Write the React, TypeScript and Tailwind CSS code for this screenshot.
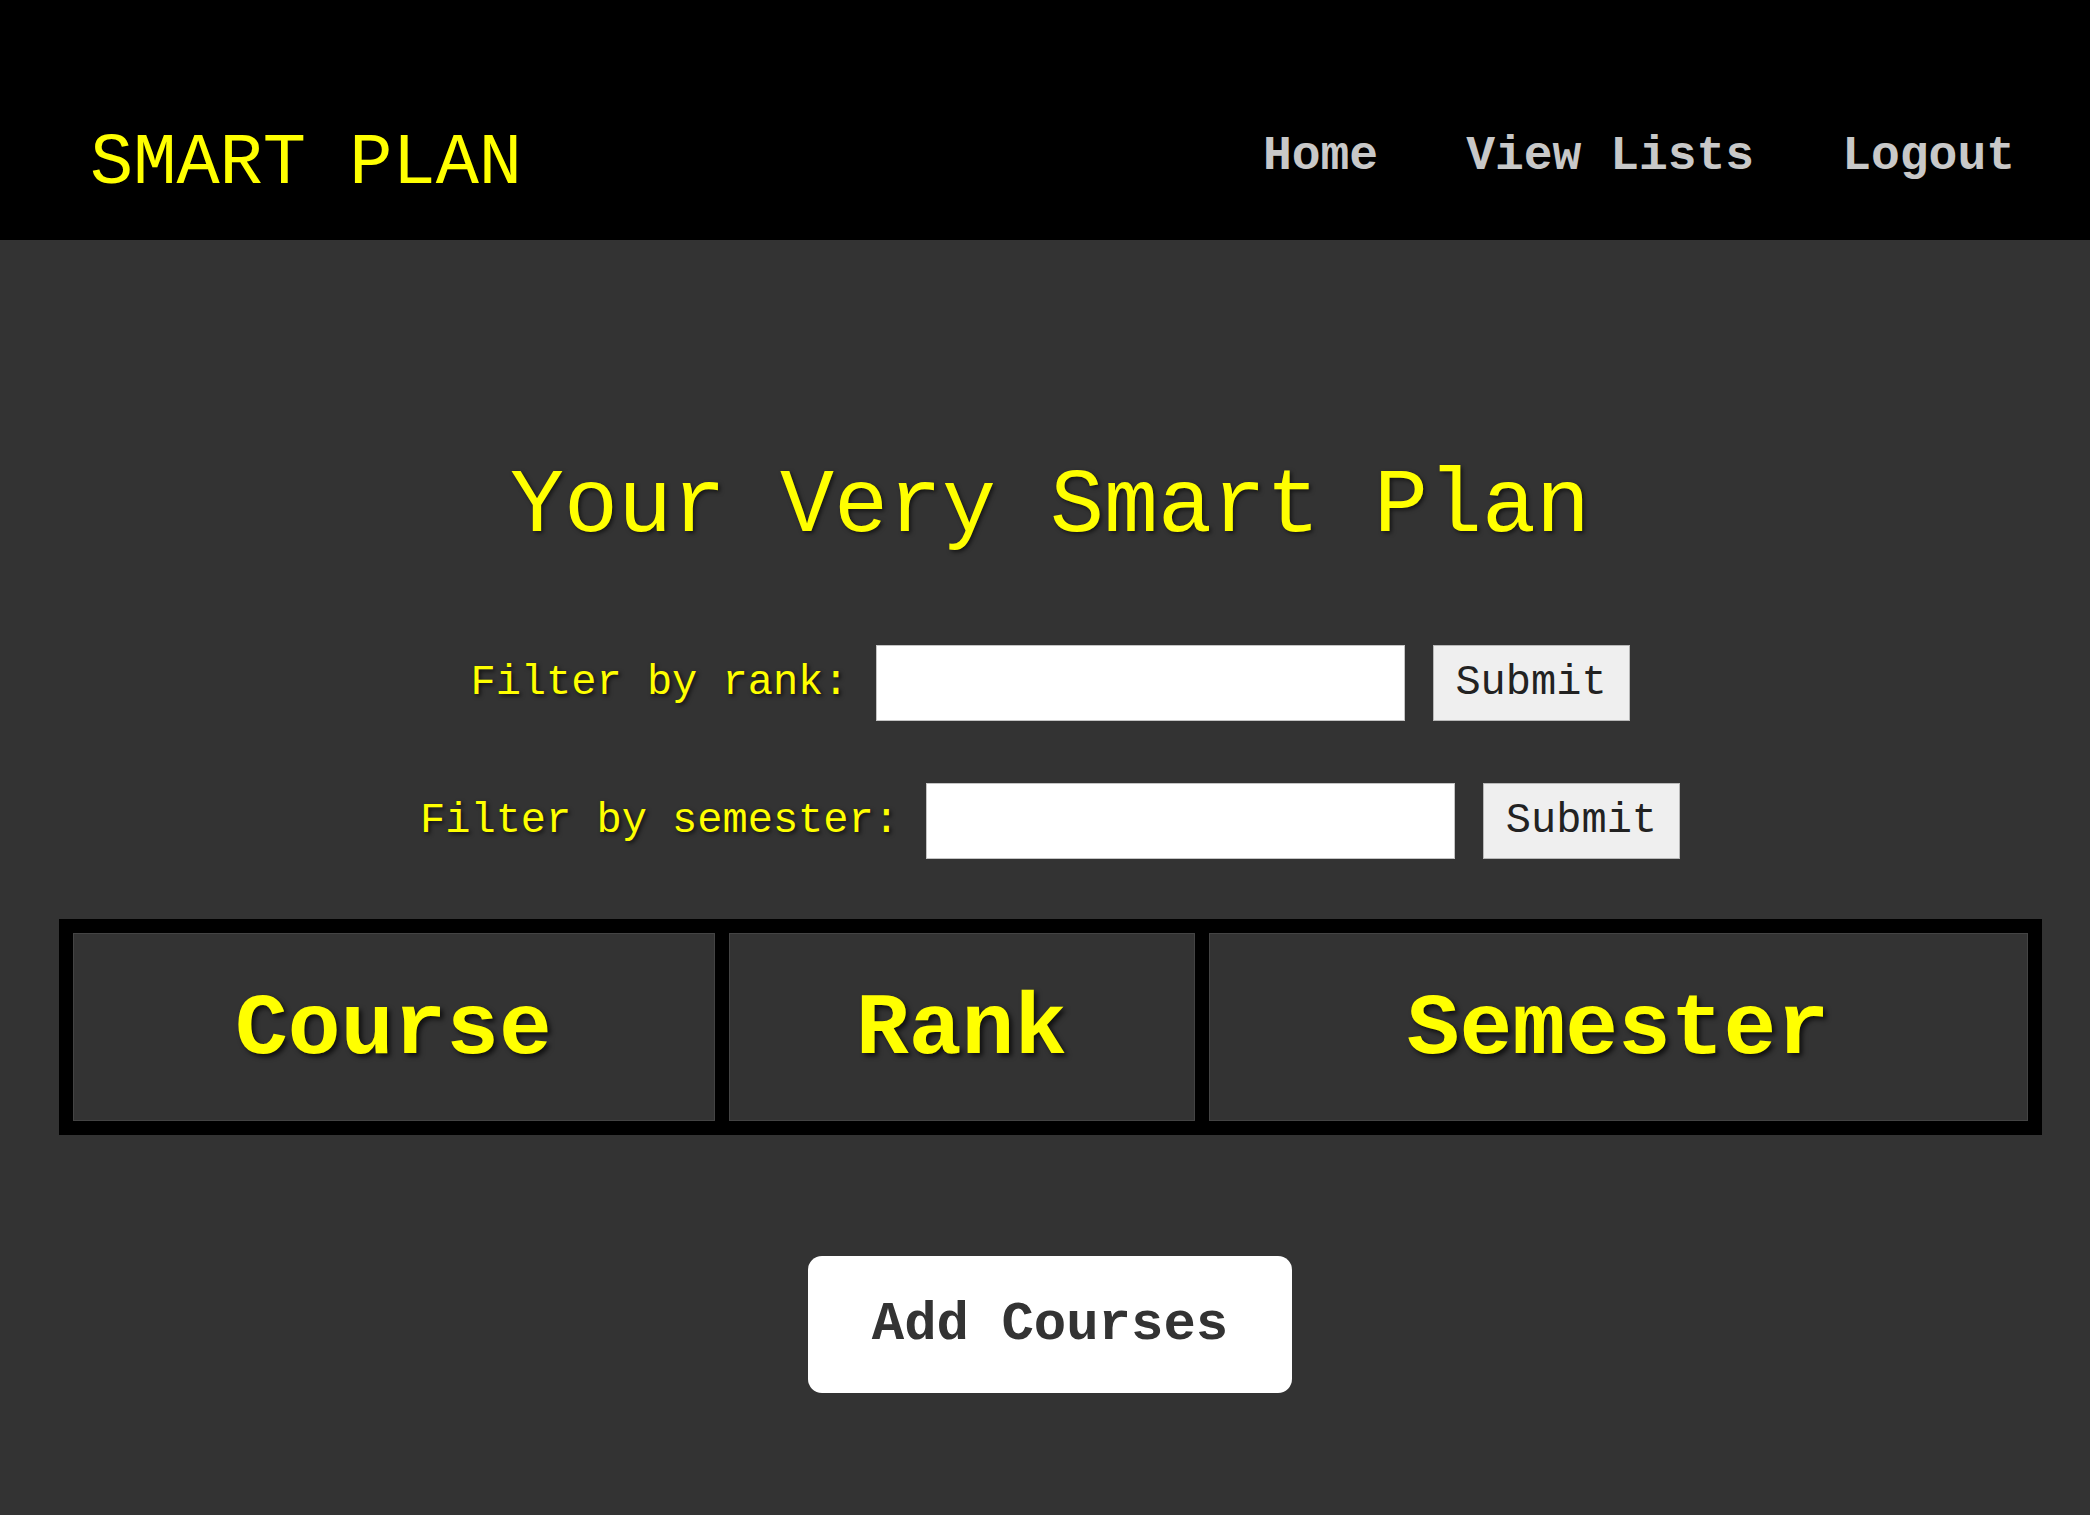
import React from "react";

const NAV = ["Home", "View Lists", "Logout"];
const COLUMNS = [
  { label: "Course", width: "w-[642px]" },
  { label: "Rank", width: "w-[466px]" },
  { label: "Semester", width: "w-[819px]" },
];

// One "Filter by ..." line: label, text box and a grey submit button
const FilterRow = ({ label }: { label: string }) => (
  <div className="flex items-center justify-center">
    <label className="text-[42px] leading-none text-[#ffff00] [text-shadow:2px_2px_4px_rgba(0,0,0,0.7)]">
      {label}
    </label>
    <input
      type="text"
      className="ml-[27px] h-[76px] w-[529px] border border-[#c4c4c4] bg-white outline-none"
    />
    <button className="ml-[28px] h-[76px] w-[197px] border border-[#b8b8b8] bg-[#efefef] text-[42px] leading-none text-[#222222]">
      Submit
    </button>
  </div>
);

export default function App() {
  return (
    <div className="min-h-screen bg-[#333333] font-['Liberation_Mono','Courier_New',monospace]">
      {/* ── Header ── */}
      <header className="flex h-[240px] items-center justify-between bg-black pt-[76px] pl-[90px] pr-[75px]">
        <h1 className="mt-[12px] text-[72px] leading-none text-[#ffff00]">SMART PLAN</h1>
        <nav className="flex gap-[88px] pb-[4px]">
          {NAV.map((item) => (
            <a
              key={item}
              href="#"
              className="text-[48px] font-bold leading-none text-[#c8c8c8]"
            >
              {item}
            </a>
          ))}
        </nav>
      </header>

      {/* ── Main ── */}
      <main className="flex flex-col items-center pb-[120px] pl-[10px]">
        <h2 className="mt-[222px] text-[90px] leading-none text-[#ffff00] [text-shadow:2px_2px_4px_rgba(0,0,0,0.6)]">
          Your Very Smart Plan
        </h2>

        <div className="mt-[93px] flex flex-col gap-[62px]">
          <FilterRow label="Filter by rank:" />
          <FilterRow label="Filter by semester:" />
        </div>

        {/* ── Course table ── */}
        <div className="mt-[60px] flex gap-[14px] bg-black p-[14px]">
          {COLUMNS.map((col) => (
            <div
              key={col.label}
              className={`${col.width} flex h-[188px] items-center justify-center border border-[#444444] bg-[#333333]`}
            >
              <span className="mt-[6px] text-[88px] font-bold leading-none text-[#ffff00] [text-shadow:3px_3px_5px_rgba(0,0,0,0.7)]">
                {col.label}
              </span>
            </div>
          ))}
        </div>

        <button className="mt-[121px] flex h-[137px] w-[484px] items-center justify-center rounded-[14px] bg-white text-[54px] font-bold text-[#333333]">
          Add Courses
        </button>
      </main>
    </div>
  );
}
